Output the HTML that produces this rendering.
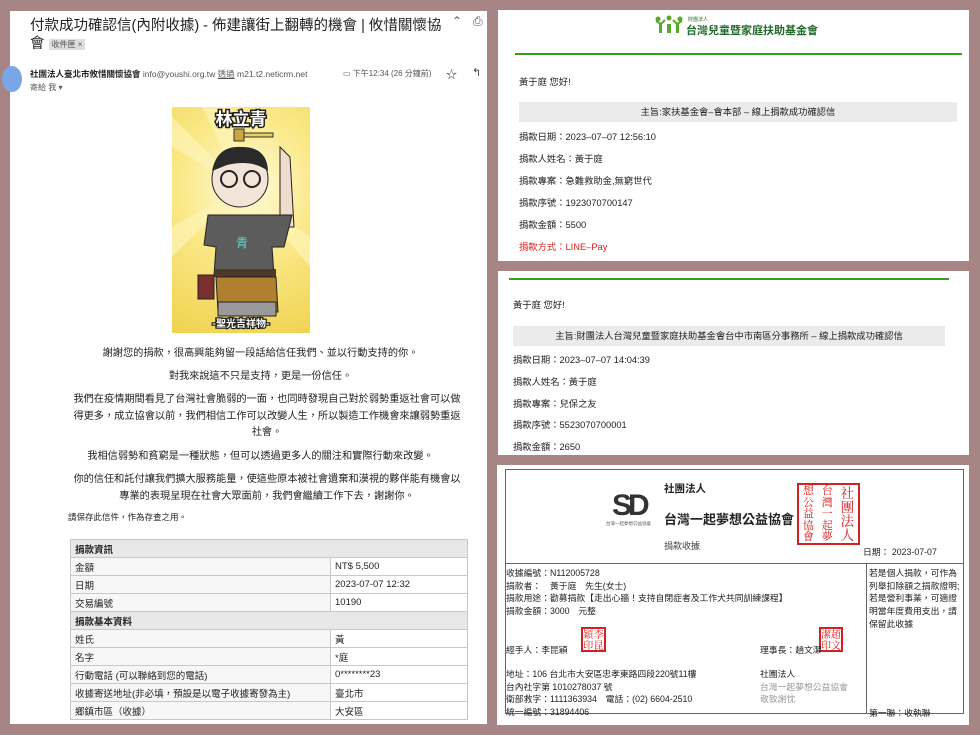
<!DOCTYPE html>
<html><head><meta charset="utf-8"><style>
*{margin:0;padding:0;box-sizing:border-box}
body{width:980px;height:735px;background:#a88585;position:relative;overflow:hidden;font-family:"Liberation Sans","Noto Sans CJK TC",sans-serif;color:#222}
.p{position:absolute;background:#fff}
.a{position:absolute;white-space:nowrap}
table{border-collapse:collapse;position:absolute;left:70px;top:539px;width:398px;font-size:9.5px}
td{border:1px solid #c8c8c8;height:18px;padding:0 4px;background:#f7f7f7}
tr.h td{background:#e8e8e8;font-weight:bold}
.r td:nth-child(2){background:#fff}
.st{position:absolute;border:2px solid #d42020;color:#d42020;font-family:'Noto Serif CJK SC',serif;display:flex;flex-direction:row-reverse;justify-content:space-around;align-items:flex-start;overflow:hidden}
.st div{text-align:center}
</style></head><body>

<!-- left panel -->
<div class="p" style="left:10px;top:11px;width:477px;height:713px">
  <div class="a" style="left:20px;top:3px;font-size:14.5px;color:#222">付款成功確認信(內附收據) - 佈建讓街上翻轉的機會 | 攸惜關懷協</div>
  <div class="a" style="left:20px;top:21px;font-size:14.5px">會 <span style="font-size:8px;background:#ddd;color:#555;padding:1px 3px;vertical-align:middle">收件匣 ×</span></div>
  <div class="a" style="left:442px;top:3px;font-size:12px;color:#555">⌃</div>
  <div class="a" style="left:463px;top:3px;font-size:12px;color:#555">⎙</div>
  <div style="position:absolute;left:-8px;top:55px;width:20px;height:26px;border-radius:50%;background:#7aa6e8"></div>
  <div class="a" style="left:20px;top:57px;font-size:8.5px"><b>社團法人臺北市攸惜關懷協會</b> <span style="color:#555">info@youshi.org.tw <u>透過</u> m21.t2.neticrm.net</span></div>
  <div class="a" style="left:20px;top:71px;font-size:8px;color:#555">寄給 我 ▾</div>
  <div class="a" style="left:333px;top:57px;font-size:8px;color:#555">▭ 下午12:34 (26 分鐘前)</div>
  <div class="a" style="left:436px;top:55px;font-size:11px;color:#444">☆</div>
  <div class="a" style="left:462px;top:55px;font-size:11px;color:#444">↰</div>
  <!-- illustration -->
  <div style="position:absolute;left:162px;top:96px;width:138px;height:226px;background:radial-gradient(circle at 55% 35%,#fffbe0 0,#fbe98a 40%,#f0d24f 100%);overflow:hidden">
    <svg width="138" height="226" viewBox="0 0 138 226">
      <g fill="#fff6c0" opacity=".6"><polygon points="70,80 0,10 0,40"/><polygon points="70,80 30,0 60,0"/><polygon points="70,80 0,120 0,150"/><polygon points="70,80 138,130 138,160"/></g>
      <text x="69" y="18" font-size="17" font-weight="bold" text-anchor="middle" fill="#fff" stroke="#222" stroke-width="3" paint-order="stroke" font-family="Noto Sans CJK TC">林立青</text>
      <rect x="65" y="26" width="36" height="4" fill="#e8d060" stroke="#333"/><rect x="62" y="22" width="10" height="12" fill="#caa840" stroke="#333"/>
      <path d="M108 40 L118 50 L122 120 L108 120 Z" fill="#f0dccc" stroke="#222"/>
      <ellipse cx="68" cy="72" rx="28" ry="28" fill="#f3e4d8" stroke="#222"/>
      <path d="M40 64 Q45 38 70 40 Q95 40 96 64 Q80 52 55 58 Z" fill="#2a2a2a"/>
      <circle cx="57" cy="72" r="8" fill="none" stroke="#222" stroke-width="2"/><circle cx="80" cy="72" r="8" fill="none" stroke="#222" stroke-width="2"/>
      <path d="M36 108 L120 108 L112 140 L100 140 L102 168 L42 168 L44 140 L32 138 Z" fill="#5c5c5c" stroke="#222"/>
      <text x="64" y="140" font-size="12" fill="#5ed8d8" font-family="Noto Sans CJK TC">青</text>
      <rect x="42" y="162" width="62" height="8" fill="#4a3a2a"/>
      <path d="M44 170 L104 170 L106 205 L46 205 Z" fill="#b08030" stroke="#222"/>
      <rect x="26" y="168" width="16" height="24" fill="#7a3030" stroke="#222"/>
      <rect x="46" y="195" width="58" height="14" fill="#999" stroke="#222"/>
      <text x="69" y="220" font-size="10" font-weight="bold" text-anchor="middle" fill="#fff" stroke="#222" stroke-width="2.5" paint-order="stroke" font-family="Noto Sans CJK TC">-聖光吉祥物-</text>
    </svg>
  </div>
  <div style="position:absolute;left:0;top:335px;width:477px;font-size:10.2px;text-align:center;line-height:16.5px;color:#222">
    <div style="position:absolute;left:12px;top:0;width:477px">謝謝您的捐款，很高興能夠留一段話給信任我們、並以行動支持的你。</div>
    <div style="position:absolute;left:12px;top:23px;width:477px">對我來說這不只是支持，更是一份信任。</div>
    <div style="position:absolute;left:63px;top:46px;width:388px">我們在疫情期間看見了台灣社會脆弱的一面，也同時發現自己對於弱勢重返社會可以做得更多，成立協會以前，我們相信工作可以改變人生，所以製造工作機會來讓弱勢重返社會。</div>
    <div style="position:absolute;left:12px;top:103px;width:477px">我相信弱勢和貧窮是一種狀態，但可以透過更多人的關注和實際行動來改變。</div>
    <div style="position:absolute;left:63px;top:126px;width:388px">你的信任和託付讓我們擴大服務能量，使這些原本被社會遺棄和漠視的夥伴能有機會以專業的表現呈現在社會大眾面前，我們會繼續工作下去，謝謝你。</div>
  </div>
  <div class="a" style="left:58px;top:500px;font-size:8.5px">請保存此信件，作為存查之用。</div>
</div>
<table>
<tr class="h"><td colspan="2">捐款資訊</td></tr>
<tr class="r"><td style="width:260px">金額</td><td>NT$ 5,500</td></tr>
<tr class="r"><td>日期</td><td>2023-07-07 12:32</td></tr>
<tr class="r"><td>交易編號</td><td>10190</td></tr>
<tr class="h"><td colspan="2">捐款基本資料</td></tr>
<tr class="r"><td>姓氏</td><td>黃</td></tr>
<tr class="r"><td>名字</td><td>*庭</td></tr>
<tr class="r"><td>行動電話 (可以聯絡到您的電話)</td><td>0********23</td></tr>
<tr class="r"><td>收據寄送地址(非必填，預設是以電子收據寄發為主)</td><td>臺北市</td></tr>
<tr class="r"><td>鄉鎮市區（收據）</td><td>大安區</td></tr>
</table>

<!-- right top -->
<div class="p" style="left:498px;top:10px;width:471px;height:251px;font-size:9.3px">
  <svg style="position:absolute;left:157px;top:5px" width="28" height="18" viewBox="0 0 28 18"><g fill="#5aa82a"><circle cx="3" cy="4" r="2.5"/><circle cx="14" cy="3" r="2.5"/><circle cx="25" cy="4" r="2.5"/><rect x="4" y="8" width="3" height="10"/><rect x="12" y="9" width="4" height="9"/><rect x="21" y="8" width="3" height="10"/></g><path d="M1 6 L6 9 L10 5 M18 5 L22 9 L27 6" stroke="#5aa82a" stroke-width="2" fill="none"/></svg>
  <div class="a" style="left:190px;top:6px;font-size:5px;color:#2a6a2a">財團法人</div>
  <div class="a" style="left:188px;top:12px;font-size:11px;font-weight:bold;color:#1f6a2a">台灣兒童暨家庭扶助基金會</div>
  <div style="position:absolute;left:17px;top:43px;width:447px;height:2px;background:#3a9a1a"></div>
  <div class="a" style="left:21px;top:64px">黃于庭 您好!</div>
  <div style="position:absolute;left:21px;top:92px;width:438px;height:20px;background:#ebebeb;text-align:center;line-height:20px">主旨:家扶基金會–會本部 – 線上捐款成功確認信</div>
  <div class="a" style="left:21px;top:119px">捐款日期：2023–07–07 12:56:10</div>
  <div class="a" style="left:21px;top:141px">捐款人姓名：黃于庭</div>
  <div class="a" style="left:21px;top:163px">捐款專案：急難救助金,無窮世代</div>
  <div class="a" style="left:21px;top:185px">捐款序號：1923070700147</div>
  <div class="a" style="left:21px;top:207px">捐款金額：5500</div>
  <div class="a" style="left:21px;top:229px;color:#d82020">捐款方式：LINE–Pay</div>
</div>

<!-- right middle -->
<div class="p" style="left:498px;top:271px;width:471px;height:184px;font-size:9.3px">
  <div style="position:absolute;left:11px;top:7px;width:440px;height:2px;background:#3a9a1a"></div>
  <div class="a" style="left:15px;top:26px">黃于庭 您好!</div>
  <div style="position:absolute;left:15px;top:55px;width:432px;height:20px;background:#ebebeb;text-align:center;line-height:20px">主旨:財團法人台灣兒童暨家庭扶助基金會台中市南區分事務所 – 線上捐款成功確認信</div>
  <div class="a" style="left:15px;top:81px">捐款日期：2023–07–07 14:04:39</div>
  <div class="a" style="left:15px;top:103px">捐款人姓名：黃于庭</div>
  <div class="a" style="left:15px;top:125px">捐款專案：兒保之友</div>
  <div class="a" style="left:15px;top:146px">捐款序號：5523070700001</div>
  <div class="a" style="left:15px;top:168px">捐款金額：2650</div>
</div>

<!-- right bottom -->
<div class="p" style="left:497px;top:465px;width:472px;height:260px;font-size:8.8px">
  <div style="position:absolute;left:8px;top:4px;width:459px;height:245px;border:1px solid #666"></div>
  <div style="position:absolute;left:8px;top:98px;width:459px;border-top:1px solid #666"></div>
  <div style="position:absolute;left:369px;top:98px;height:151px;border-left:1px solid #666"></div>
  <div class="a" style="left:115px;top:24px;font-size:30px;font-weight:bold;color:#333;letter-spacing:-4px">SD</div>
  <div class="a" style="left:109px;top:56px;font-size:4.5px;color:#555">台灣一起夢想公益協會</div>
  <div class="a" style="left:167px;top:16px;font-size:10.5px;font-weight:bold">社團法人</div>
  <div class="a" style="left:167px;top:44px;font-size:13px;font-weight:bold">台灣一起夢想公益協會</div>
  <div class="a" style="left:167px;top:74px;font-size:9px;color:#444">捐款收據</div>
  <div class="st" style="left:300px;top:18px;width:63px;height:62px">
    <div style="font-size:13.5px;line-height:14px">社<br>團<br>法<br>人</div>
    <div style="font-size:11px;line-height:11.6px">台<br>灣<br>一<br>起<br>夢</div>
    <div style="font-size:11px;line-height:11.6px">想<br>公<br>益<br>協<br>會</div>
  </div>
  <div class="a" style="left:366px;top:80px">日期： 2023-07-07</div>
  <div style="position:absolute;left:9px;top:102px;line-height:12.7px">收據編號：N112005728<br>捐款者：　黃于庭　先生(女士)<br>捐款用途：勸募捐款【走出心牆！支持自閉症者及工作犬共同訓練課程】<br>捐款金額：3000　元整</div>
  <div style="position:absolute;left:372px;top:102px;width:94px;line-height:12.7px;white-space:normal">若是個人捐款，可作為列舉扣除額之捐款證明;若是營利事業，可適證明當年度費用支出，請保留此收據</div>
  <div class="st" style="left:84px;top:162px;width:25px;height:25px"><div style="font-size:10px;line-height:10.5px">李<br>昆</div><div style="font-size:10px;line-height:10.5px">穎<br>印</div></div>
  <div class="st" style="left:322px;top:162px;width:24px;height:25px"><div style="font-size:10px;line-height:10.5px">趙<br>文</div><div style="font-size:10px;line-height:10.5px">潔<br>印</div></div>
  <div class="a" style="left:9px;top:178px">經手人：李昆穎</div>
  <div class="a" style="left:263px;top:178px">理事長：趙文潔</div>
  <div style="position:absolute;left:9px;top:203px;line-height:12.7px">地址：106 台北市大安區忠孝東路四段220號11樓<br>台內社字第 1010278037 號<br>衛部救字：1111363934　電話：(02) 6604-2510<br>統一編號：31894406</div>
  <div style="position:absolute;left:263px;top:203px;line-height:12.7px">社團法人<br><span style="color:#999">台灣一起夢想公益協會<br>敬致謝忱</span></div>
  <div class="a" style="left:372px;top:241px">第一聯：收執聯</div>
</div>
</body></html>
